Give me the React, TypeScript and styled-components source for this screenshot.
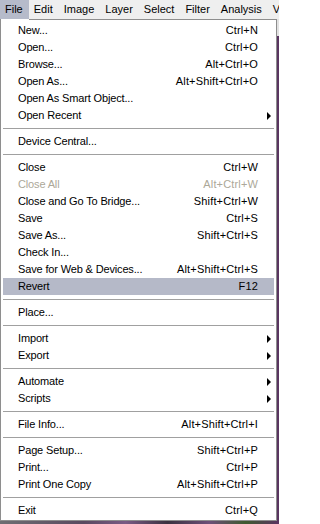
import styled, { createGlobalStyle } from 'styled-components'

type Entry =
    | { kind: 'item'; label: string; shortcut?: string; sub?: boolean; disabled?: boolean; active?: boolean }
    | { kind: 'sep' }

const sep: Entry = { kind: 'sep' }

const entries: Entry[] = [
    { kind: 'item', label: 'New...', shortcut: 'Ctrl+N' },
    { kind: 'item', label: 'Open...', shortcut: 'Ctrl+O' },
    { kind: 'item', label: 'Browse...', shortcut: 'Alt+Ctrl+O' },
    { kind: 'item', label: 'Open As...', shortcut: 'Alt+Shift+Ctrl+O' },
    { kind: 'item', label: 'Open As Smart Object...' },
    { kind: 'item', label: 'Open Recent', sub: true },
    sep,
    { kind: 'item', label: 'Device Central...' },
    sep,
    { kind: 'item', label: 'Close', shortcut: 'Ctrl+W' },
    { kind: 'item', label: 'Close All', shortcut: 'Alt+Ctrl+W', disabled: true },
    { kind: 'item', label: 'Close and Go To Bridge...', shortcut: 'Shift+Ctrl+W' },
    { kind: 'item', label: 'Save', shortcut: 'Ctrl+S' },
    { kind: 'item', label: 'Save As...', shortcut: 'Shift+Ctrl+S' },
    { kind: 'item', label: 'Check In...' },
    { kind: 'item', label: 'Save for Web & Devices...', shortcut: 'Alt+Shift+Ctrl+S' },
    { kind: 'item', label: 'Revert', shortcut: 'F12', active: true },
    sep,
    { kind: 'item', label: 'Place...' },
    sep,
    { kind: 'item', label: 'Import', sub: true },
    { kind: 'item', label: 'Export', sub: true },
    sep,
    { kind: 'item', label: 'Automate', sub: true },
    { kind: 'item', label: 'Scripts', sub: true },
    sep,
    { kind: 'item', label: 'File Info...', shortcut: 'Alt+Shift+Ctrl+I' },
    sep,
    { kind: 'item', label: 'Page Setup...', shortcut: 'Shift+Ctrl+P' },
    { kind: 'item', label: 'Print...', shortcut: 'Ctrl+P' },
    { kind: 'item', label: 'Print One Copy', shortcut: 'Alt+Shift+Ctrl+P' },
    sep,
    { kind: 'item', label: 'Exit', shortcut: 'Ctrl+Q' },
]

// only the menus that reach into the visible strip
const menus = ['File', 'Edit', 'Image', 'Layer', 'Select', 'Filter', 'Analysis', 'View']

const App = () => {
    return (
        <Page>
            <Global />
            <MenuBar>
                {menus.map((m, i) => (
                    <BarItem key={m} open={i === 0}>{m}</BarItem>
                ))}
            </MenuBar>

            <Menu>
                {entries.map((e, i) =>
                    e.kind === 'sep' ? (
                        <Separator key={i} />
                    ) : (
                        <Item key={i} active={e.active} disabled={e.disabled}>
                            <Label>{e.label}</Label>
                            <Shortcut>{e.shortcut}</Shortcut>
                            <ArrowCell>{e.sub && <Arrow />}</ArrowCell>
                        </Item>
                    )
                )}
            </Menu>
        </Page>
    )
}

export default App

const Global = createGlobalStyle`
html, body {
    margin: 0;
    padding: 0;
    overflow: hidden;
}
body {
    font-family: "Liberation Sans", Arial, sans-serif;
    font-size: 11px;
}
`

const Page = styled.div`
width: 279px;
height: 524px;
overflow: hidden;
display: flex;
flex-direction: column;
background:
    linear-gradient(180deg, #e2e2e2 0, #e2e2e2 36px, transparent 36px),
    linear-gradient(90deg, #6e6e72 0, #5a4a60 30%, #7a5a84 45%, #3b3240 60%, #6d4f78 75%, #3f5a30 88%, #5a3462 100%);
`

const MenuBar = styled.div`
height: 19px;
flex: none;
display: flex;
white-space: nowrap;
overflow: hidden;
background: #efefef;
`

const BarItem = styled.div<{ open?: boolean }>`
padding: 0 6px 0 5px;
line-height: 19px;
color: #000;
background: ${p => p.open ? '#b6bbca' : 'transparent'};
`

const Menu = styled.div`
width: 277px;
box-sizing: border-box;
padding: 3px 2px 1px;
border: 1px solid #8e8e8e;
border-top: none;
background:
    linear-gradient(#8e8e8e, #8e8e8e) 28px 0 / 100% 1px no-repeat,
    #ffffff;
display: flex;
flex-direction: column;
`

const Item = styled.div<{ active?: boolean; disabled?: boolean }>`
height: 17px;
line-height: 17px;
display: grid;
grid-template-columns: 1fr auto 16px;
align-items: center;
padding-left: 15px;
white-space: nowrap;
color: ${p => p.disabled ? '#aca899' : '#000'};
background: ${p => p.active ? '#b5b9c8' : 'transparent'};
`

const Label = styled.span`
letter-spacing: -0.15px;
`

const Shortcut = styled.span`
text-align: right;
letter-spacing: 0.15px;
`

const ArrowCell = styled.span`
display: flex;
align-items: center;
padding-left: 9px;
`

const Arrow = styled.span`
width: 0;
height: 0;
border-left: 4px solid #000;
border-top: 4px solid transparent;
border-bottom: 4px solid transparent;
`

const Separator = styled.div`
height: 9px;
display: flex;
align-items: center;

&::before {
    content: "";
    flex: 1;
    height: 1px;
    background: #a0a0a0;
}
`
